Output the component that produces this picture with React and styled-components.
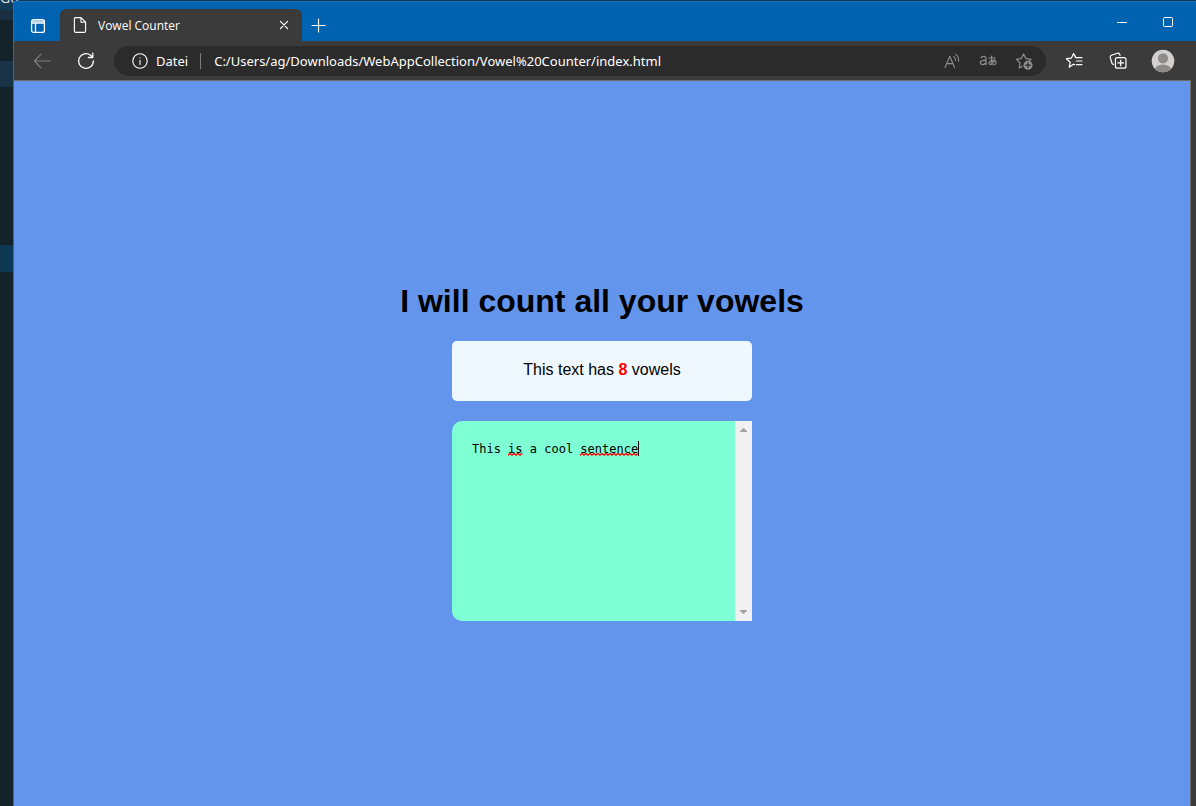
import React, { useState } from "react";
import styled, { createGlobalStyle } from "styled-components";

const GlobalStyle = createGlobalStyle`
  *, *::before, *::after { box-sizing: border-box; }
  body { margin: 0; font-family: "Open Sans", "Noto Sans", sans-serif; }
  button { font: inherit; color: inherit; background: none; border: 0; padding: 0; }
`;

const Desktop = styled.div`
  position: relative;
  display: flex;
  flex-direction: column;
  min-height: 100vh;
  padding: 1px 0 0 13px;
  overflow: hidden;
  background: linear-gradient(
    #103a55 0 10px, #1a3040 10px 20px, #14222a 20px 61px, #1a3447 61px 87px,
    #14222a 87px 245px, #0c3853 245px 272px, #14222a 272px
  );
`;

/* Lower edge of the editor's menu, mostly covered by the browser window. */
const CoveredMenu = styled.div`
  position: absolute;
  top: -12px;
  left: 0;
  color: #d8dde0;
  font-size: 14px;
  line-height: 20px;
`;

const Window = styled.div`
  position: relative;
  flex: 1;
  display: flex;
  flex-direction: column;
  background: #3b3b3b;
  border-left: 1px solid #1f6fb8;
`;

const TitleBar = styled.header`
  display: flex;
  align-items: flex-end;
  height: 40px;
  padding-left: 1px;
  background: #0063b1;
  border-top: 1px solid #1a70b5;
  color: #fff;
`;

const IconButton = styled.button`
  display: flex;
  align-items: center;
  justify-content: center;
  flex: none;
  width: ${(p) => p.$width || 44}px;
  height: ${(p) => p.$height || 32}px;
  color: ${(p) => p.$color || "#fff"};
  svg { display: block; }
`;

const TabActions = styled(IconButton)`
  height: 30px;
`;

const Tab = styled.div`
  display: flex;
  align-items: center;
  width: 242px;
  height: 32px;
  padding: 0 6px 0 12px;
  gap: 10px;
  border-radius: 6px 6px 0 0;
  background: #3b3b3b;
  font-size: 12px;
`;

const TabTitle = styled.span`
  flex: 1;
`;

const WindowControls = styled.div`
  display: flex;
  align-self: flex-start;
  margin-left: auto;
  padding-top: 4px;
  padding-right: 5px;
`;

const Toolbar = styled.nav`
  display: flex;
  align-items: center;
  height: 39px;
  padding: 0 10px 0 6px;
  color: #fff;
`;

const AddressBar = styled.div`
  flex: 1;
  display: flex;
  align-items: center;
  height: 30px;
  margin: 0 6px;
  padding: 0 4px 0 18px;
  border-radius: 15px;
  background: #2b2b2b;
  font-family: "Noto Sans", "Open Sans", sans-serif;
  font-size: 13px;
`;

const Scheme = styled.span`
  margin-left: 8px;
  padding-right: 12px;
  line-height: 16px;
  border-right: 1px solid #7c7c7c;
`;

const UrlInput = styled.input`
  flex: 1;
  min-width: 0;
  padding: 0;
  margin-left: 13px;
  border: 0;
  outline: 0;
  background: none;
  color: #fff;
  font: inherit;
`;

const Page = styled.main`
  flex: 1;
  display: flex;
  flex-direction: column;
  align-items: center;
  gap: 20px;
  margin-right: 5px;
  padding-top: 200px;
  background: cornflowerblue;
  border-top: 1px solid #6f6c68;
  border-right: 1px solid #6f6c68;
  font-family: "Liberation Sans", Arial, sans-serif;
  color: #000;
`;

const Heading = styled.h1`
  margin: 0;
  font-size: 32px;
  line-height: 40px;
`;

const Result = styled.p`
  width: 300px;
  height: 60px;
  margin: 0;
  padding-top: 19px;
  border-radius: 5px;
  background: aliceblue;
  text-align: center;
  font-size: 16px;
  line-height: 20px;
`;

const Count = styled.strong`
  color: red;
`;

const Editor = styled.div`
  position: relative;
  display: flex;
  width: 300px;
  height: 200px;
  font-family: "DejaVu Sans Mono", monospace;
  font-size: 12px;
  line-height: 16px;
`;

const TextBox = styled.textarea`
  flex: 1;
  min-width: 0;
  padding: 20px;
  border: 0;
  border-radius: 10px 0 0 10px;
  outline: 0;
  resize: none;
  overflow: hidden;
  background: aquamarine;
  color: #000;
  font: inherit;
`;

const ScrollTrack = styled.div`
  display: flex;
  flex-direction: column;
  align-items: center;
  justify-content: space-between;
  width: 17px;
  padding: 7px 0;
  background: #f1f1f1;
  svg { display: block; }
`;

const Marks = styled.div`
  position: absolute;
  top: 20px;
  left: 20px;
  display: flex;
  height: 15px;
  pointer-events: none;
`;

const Gap = styled.span`
  width: ${(p) => p.$chars}ch;
`;

const Squiggle = styled.svg`
  align-self: flex-end;
  width: ${(p) => p.$chars}ch;
  height: 3px;
`;

const Caret = styled.span`
  width: 1px;
  background: #000;
`;

const Icon = ({ size = 18, children, stroke = 1.2 }) => (
  <svg width={size} height={size} viewBox={`0 0 ${size} ${size}`} fill="none" stroke="currentColor"
    strokeWidth={stroke} strokeLinecap="round" strokeLinejoin="round" aria-hidden="true">
    {children}
  </svg>
);

const Misspelling = ({ chars, id }) => (
  <Squiggle $chars={chars} aria-hidden="true">
    <defs>
      <pattern id={id} width="4" height="3" patternUnits="userSpaceOnUse">
        <path d="M-1 3L2 .5L5 3" fill="none" stroke="#f00" strokeWidth="1.3" />
      </pattern>
    </defs>
    <rect width="100%" height="3" fill={`url(#${id})`} />
  </Squiggle>
);

export default function App() {
  const [text, setText] = useState("This is a cool sentence");
  const [url, setUrl] = useState("C:/Users/ag/Downloads/WebAppCollection/Vowel%20Counter/index.html");
  const vowels = (text.match(/[aeiou]/gi) || []).length;
  const untouched = text === "This is a cool sentence";

  return (
    <Desktop>
      <GlobalStyle />
      <CoveredMenu aria-hidden="true">Go</CoveredMenu>
      <Window>
        <TitleBar>
          <TabActions $width={45} aria-label="Tab actions">
            <Icon size={16} stroke={1.3}>
              <rect x="1.6" y="1.6" width="12.8" height="12.8" rx="2" />
              <path d="M2 3.2H14M1.6 5H14.4M5.5 5V14" />
            </Icon>
          </TabActions>
          <Tab>
            <Icon size={16} stroke={1.1}>
              <path d="M3.4 .6H9L13.6 5.2V14Q13.6 15.4 12.2 15.4H3.8Q2.4 15.4 2.4 14V2Q2.4 .6 3.8 .6M9 .8V5.2H13.4" />
            </Icon>
            <TabTitle>Vowel Counter</TabTitle>
            <IconButton $width={24} $height={24} aria-label="Close tab">
              <Icon size={10} stroke={1.3}><path d="M1.4 1.4L8.6 8.6M8.6 1.4L1.4 8.6" /></Icon>
            </IconButton>
          </Tab>
          <IconButton $width={32} aria-label="New tab">
            <Icon size={15}><path d="M7.5 1V14M1 7.5H14" /></Icon>
          </IconButton>
          <WindowControls>
            <IconButton $width={46} aria-label="Minimize">
              <Icon size={12} stroke={1}><path d="M1.5 6.5H10.5" /></Icon>
            </IconButton>
            <IconButton $width={46} aria-label="Maximize">
              <Icon size={12} stroke={1}><rect x="1.5" y="1.5" width="9" height="9" rx="1" /></Icon>
            </IconButton>
          </WindowControls>
        </TitleBar>

        <Toolbar aria-label="Browser">
          <IconButton $color="#7f7f7f" aria-label="Back">
            <Icon stroke={1.1}><path d="M17 9H1.5M8 2.2L1.4 9L8 15.8" /></Icon>
          </IconButton>
          <IconButton aria-label="Refresh">
            <Icon stroke={1.3}><path d="M16.4 9A7.4 7.4 0 1 1 13.6 3.2L15.6 5.4M15.8 1.2V5.5H11.4" /></Icon>
          </IconButton>
          <AddressBar>
            <Icon size={16} stroke={1.1}>
              <circle cx="8" cy="8" r="7.2" /><path d="M8 7.2V11.5M8 4.7V5" />
            </Icon>
            <Scheme>Datei</Scheme>
            <UrlInput aria-label="Address" value={url} onChange={(e) => setUrl(e.target.value)} />
            <IconButton $width={36} $color="#8f8f8f" aria-label="Read aloud">
              <Icon size={16} stroke={1.1}>
                <path d="M1 14.5L5.8 3.2L10.6 14.5M2.8 10.6H8.9M9.6 3.4Q11.8 5 11.5 7.6M11.6 1.4Q15.2 4 14.6 8.4" />
              </Icon>
            </IconButton>
            <IconButton $width={36} $color="#8f8f8f" aria-label="Translate">
              <Icon size={18} stroke={1.2}>
                <path d="M1.8 5.8Q4.2 3.6 6.4 5Q7 5.6 7 7V12.6M7 8.2Q1.2 8.2 1.2 10.7Q1.6 12.9 4 12.6Q6 12.2 7 10.4" />
                <path d="M10 6H16.2M12.6 4.2Q12.2 9 13.2 12.6M15.2 7.6Q14.4 11.6 11.6 12.4Q9.6 12.4 10 10.6Q11.4 8.4 14.6 8.4Q17.4 8.6 17 10.8Q16.6 12.4 14.8 12.8" />
              </Icon>
            </IconButton>
            <IconButton $width={36} $color="#8f8f8f" aria-label="Add to favorites">
              <Icon size={18}>
                <path d="M7.2 14.4L4.1 16L5 11L1.4 7.3L6.2 6.6L8.6 2L10.9 6.6L16 7.3L14.7 8.5" />
                <circle cx="13" cy="13.2" r="4.5" fill="currentColor" stroke="none" />
                <path d="M13 10.8V15.6M10.6 13.2H15.4" stroke="#2b2b2b" />
              </Icon>
            </IconButton>
          </AddressBar>
          <IconButton aria-label="Favorites">
            <Icon>
              <path d="M9.6 12.6L8.4 12.2L4.2 15.2L5.2 10.2L1.4 6.7L6.4 6.1L8.6 1.6L10.8 5.6H17M11.4 9H17M11.4 12.6H17" />
            </Icon>
          </IconButton>
          <IconButton aria-label="Collections">
            <Icon>
              <rect x="6.4" y="5.6" width="10.6" height="10.6" rx="2" />
              <path d="M11.7 8V13.8M8.8 10.9H14.6M4.4 12.4Q3.2 12.2 2.9 11L1.2 5.4Q1 3.8 2.4 3.2L8.4 1.2Q10 1 10.6 2.3L11 3.4" />
            </Icon>
          </IconButton>
          <IconButton $width={46} aria-label="Profile">
            <svg width="24" height="24" viewBox="0 0 24 24" aria-hidden="true">
              <clipPath id="avatar"><circle cx="12" cy="12" r="11.3" /></clipPath>
              <g clipPath="url(#avatar)">
                <rect width="24" height="24" fill="#d2d0ce" />
                <circle cx="12" cy="9.4" r="5" fill="#8e8a87" />
                <ellipse cx="12" cy="21.4" rx="8.6" ry="5.8" fill="#8e8a87" />
              </g>
            </svg>
          </IconButton>
        </Toolbar>

        <Page>
          <Heading>I will count all your vowels</Heading>
          <Result aria-live="polite">This text has <Count>{vowels}</Count> vowels</Result>
          <Editor>
            <TextBox aria-label="Your text" spellCheck={false} value={text} onChange={(e) => setText(e.target.value)} />
            <ScrollTrack aria-hidden="true">
              <svg width="7" height="4"><path d="M0 4V3L3.5 0L7 3V4Z" fill="#a3a3a3" /></svg>
              <svg width="7" height="4"><path d="M0 0V1L3.5 4L7 1V0Z" fill="#a3a3a3" /></svg>
            </ScrollTrack>
            {untouched && (
              <Marks aria-hidden="true">
                <Gap $chars={5} />
                <Misspelling chars={2} id="wave-is" />
                <Gap $chars={8} />
                <Misspelling chars={8} id="wave-sentence" />
                <Caret />
              </Marks>
            )}
          </Editor>
        </Page>
      </Window>
    </Desktop>
  );
}
